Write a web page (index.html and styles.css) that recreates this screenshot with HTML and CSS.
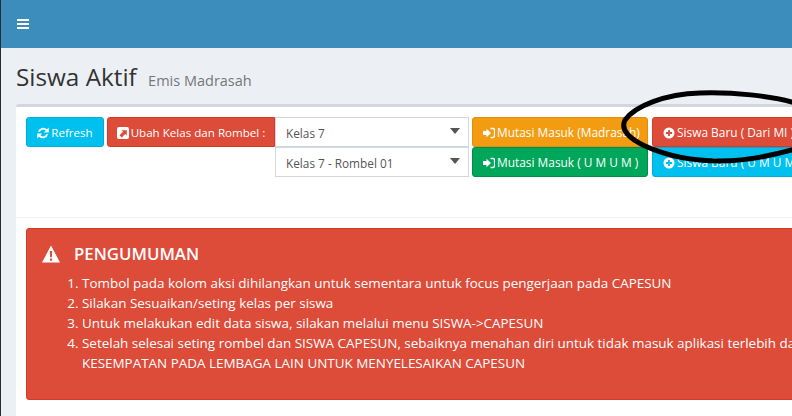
FILE: index.html
```html
<!DOCTYPE html>
<html lang="id">
<head>
<meta charset="utf-8">
<title>Siswa Aktif</title>
<link rel="stylesheet" href="styles.css">
</head>
<body>
<div class="wrapper">
  <header class="navbar">
    <svg class="burger" width="14" height="12" viewBox="0 0 14 12"><path d="M1 2h12M1 6h12M1 10h12" stroke="#fff" stroke-width="2"/></svg>
  </header>
  <main class="content">
    <h1 class="page-title">Siswa Aktif <small>Emis Madrasah</small></h1>
    <section class="box">
      <div class="toolbar">
        <button class="btn info refresh"><svg class="ico" viewBox="0.8 0.8 10.4 10.4"><path d="M1.6 5A4.6 4.6 0 0 1 9.4 2.8L11 1.3v4.2H6.8l1.5-1.5A3 3 0 0 0 3.3 5zM10.4 7A4.6 4.6 0 0 1 2.6 9.2L1 10.7V6.5h4.2L3.7 8a3 3 0 0 0 5-1z" fill="#fff"/></svg>Refresh</button>
        <button class="btn danger ubah"><svg class="ico" viewBox="0 0 12 12"><rect width="12" height="12" rx="2" fill="#fff"/><path d="M2.500 8.300L6 4.800 4.400 3.200H9.800V8.600L8.200 7 4.700 10.500z" fill="#dd4b39"/></svg>Ubah Kelas dan Rombel :</button>
        <div class="selects">
          <div class="select">Kelas 7<span class="caret"></span></div>
          <div class="select">Kelas 7 - Rombel 01<span class="caret"></span></div>
        </div>
        <div class="btn-stack mutasi">
          <button class="btn warning"><svg class="ico" viewBox="0 0 12 12"><path d="M0 4h3.500V1.800L8 6l-4.500 4.200V8H0z" fill="#fff"/><path d="M7.500 1.500H10a1.500 1.500 0 0 1 1.500 1.500v6A1.500 1.500 0 0 1 10 10.500H7.500" stroke="#fff" stroke-width="1.300" fill="none"/></svg>Mutasi Masuk (Madrasah)</button>
          <button class="btn success"><svg class="ico" viewBox="0 0 12 12"><path d="M0 4h3.500V1.800L8 6l-4.500 4.200V8H0z" fill="#fff"/><path d="M7.500 1.500H10a1.500 1.500 0 0 1 1.500 1.500v6A1.500 1.500 0 0 1 10 10.500H7.500" stroke="#fff" stroke-width="1.300" fill="none"/></svg>Mutasi Masuk ( U M U M )</button>
        </div>
        <div class="btn-stack baru">
          <button class="btn danger"><svg class="ico" viewBox="0 0 12 12"><circle cx="6" cy="6" r="5.500" fill="#fff"/><path d="M6 3v6M3 6h6" stroke="#dd4b39" stroke-width="1.800"/></svg>Siswa Baru ( Dari MI )</button>
          <button class="btn info"><svg class="ico" viewBox="0 0 12 12"><circle cx="6" cy="6" r="5.500" fill="#fff"/><path d="M6 3v6M3 6h6" stroke="#00c0ef" stroke-width="1.800"/></svg>Siswa Baru ( U M U M )</button>
        </div>
      </div>
      <div class="box-body">
        <div class="alert">
          <h4 class="alert-title"><svg class="warn" width="18" height="18" viewBox="0 0 18 18"><path fill-rule="evenodd" d="M9 0.500L18 17.500H0zM7.800 6l.3 6.300h1.800l.3-6.300zM7.900 13.500v2.200h2.200v-2.200z" fill="#fff"/></svg>PENGUMUMAN</h4>
          <ol class="notes">
            <li>Tombol pada kolom aksi dihilangkan untuk sementara untuk focus pengerjaan pada CAPESUN</li>
            <li>Silakan Sesuaikan/seting kelas per siswa</li>
            <li>Untuk melakukan edit data siswa, silakan melalui menu SISWA-&gt;CAPESUN</li>
            <li>Setelah selesai seting rombel dan SISWA CAPESUN, sebaiknya menahan diri untuk tidak masuk aplikasi terlebih dahulu untuk memberi<br>KESEMPATAN PADA LEMBAGA LAIN UNTUK MENYELESAIKAN CAPESUN</li>
          </ol>
        </div>
      </div>
    </section>
  </main>
</div>
<svg class="scribble" width="792" height="416" viewBox="0 0 792 416"><path d="M792 102C770 96 735 92 700 93C665 94 635 106 625 120C620 130 630 139 645 146C665 155 690 161 720 161C745 161 770 156 792 150" fill="none" stroke="#000" stroke-width="5" stroke-linecap="round"/></svg>
</body>
</html>
```
FILE: styles.css
```css
* { box-sizing: border-box; }
html, body { margin: 0; padding: 0; width: 792px; height: 416px; overflow: hidden; }
body { font-family: "Open Sans", sans-serif; background: #ecf0f5; color: #333; position: relative; }
.wrapper { width: 1100px; height: 416px; border-left: 1px solid #222d32; display: flex; flex-direction: column; }
.navbar { height: 48px; background: #3c8dbc; display: flex; align-items: center; padding-left: 15px; flex: none; }
.burger { display: block; }
.content { padding: 14px 15px 0; flex: 1; background: #ecf0f5; }
.page-title { margin: 0 0 13px; height: 29px; font-size: 24.300px; line-height: 29px; font-weight: 400; color: #333; }
.page-title small { font-size: 14.500px; color: #777; margin-left: 5px; }
.box { background: #fff; border-top: 3px solid #d2d6de; border-radius: 3px; height: 320px; }
.toolbar { height: 111px; padding: 10px 10px 0; border-bottom: 1px solid #f4f4f4; display: flex; align-items: flex-start; }
.btn { height: 30px; border: 1px solid transparent; border-radius: 3px; color: #fff; font: 11.600px/1 "Open Sans", sans-serif; padding: 1px 0 0; display: flex; align-items: center; justify-content: center; white-space: nowrap; }
.ico { width: 12px; height: 12px; margin-right: 2px; flex: none; }
.info { background: #00c0ef; border-color: #00acd6; }
.danger { background: #dd4b39; border-color: #d73925; }
.warning { background: #f39c12; border-color: #e08e0b; }
.success { background: #00a65a; border-color: #008d4c; }
.refresh { width: 78px; margin-right: 3px; }
.ubah { width: 168px; border-radius: 3px 0 0 3px; }
.selects { width: 194px; margin-right: 3px; }
.select { height: 30px; border: 1px solid #d2d6de; background: #fff; color: #555; font-size: 11.800px; padding: 0 0 0 10px; line-height: 30px; position: relative; }
.caret { position: absolute; right: 8px; top: 10px; border: 5px solid transparent; border-top: 6px solid #555; border-left-width: 5px; border-bottom-width: 0; }
.btn-stack { display: flex; flex-direction: column; margin-right: 4px; }
.btn-stack .btn { justify-content: flex-start; padding-left: 10px; font-size: 11.900px; }
.mutasi { width: 176px; }
.baru { width: 176px; }
.box-body { padding: 10px; }
.alert { height: 172px; background: #dd4b39; border: 1px solid #d73925; border-radius: 3px; color: #fff; padding: 14px 15px; }
.alert-title { display: flex; align-items: center; margin: 0 0 8px; font-size: 16.800px; line-height: 22px; font-weight: 600; }
.warn { margin-right: 14px; }
.notes { margin: 0; padding-left: 40px; width: 900px; font-size: 13.450px; line-height: 20px; }
.scribble { position: absolute; left: 0; top: 0; pointer-events: none; }
```
